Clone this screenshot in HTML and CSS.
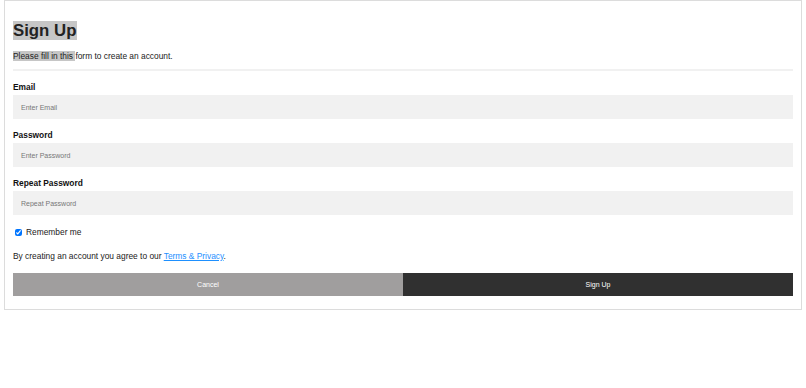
FILE: index.html
```html
<!DOCTYPE html>
<html>
<head>
<meta charset="utf-8">
<link rel="stylesheet" href="styles.css">
</head>
<body>
<form class="signup">
  <div class="container">
    <h1 class="title"><span class="sel">Sign Up </span></h1>
    <p class="intro"><span class="sel">Please fill in this </span>form to create an account.</p>
    <hr class="rule">

    <label class="field-label" for="email">Email</label>
    <input class="field" type="text" id="email" placeholder="Enter Email">

    <label class="field-label" for="psw">Password</label>
    <input class="field" type="password" id="psw" placeholder="Enter Password">

    <label class="field-label" for="psw-repeat">Repeat Password</label>
    <input class="field" type="password" id="psw-repeat" placeholder="Repeat Password">

    <label class="remember"><input class="check" type="checkbox" checked> Remember me</label>

    <p class="terms">By creating an account you agree to our <a class="link" href="#">Terms &amp; Privacy</a>.</p>

    <div class="actions">
      <button type="button" class="btn cancel">Cancel</button>
      <button type="button" class="btn submit">Sign Up</button>
    </div>
  </div>
</form>
</body>
</html>
```

FILE: styles.css
```css
html, body {
  margin: 0;
  padding: 0;
  background: #fff;
}
body {
  padding: 0 4px;
  font-family: "Liberation Sans", Arial, sans-serif;
  font-size: 8.4px;
  color: #222;
}
.signup {
  margin: 0;
}
.container {
  border: 1px solid #dcdcdc;
  padding: 8px 8px 9px 8px;
  box-sizing: border-box;
}
.title {
  font-size: 16.8px;
  line-height: 19px;
  margin: 12px 0 11px;
  font-weight: bold;
  color: #222;
}
.sel {
  background: #c6c6c6;
}
.title .sel {
  padding-right: 1px;
}
.intro {
  margin: 0 0 8px;
  line-height: 10px;
}
.rule {
  border: 0;
  border-top: 1px solid #f1f1f1;
  border-bottom: 1px solid #f1f1f1;
  height: 0;
  margin: 0 0 11px;
}
.field-label {
  display: block;
  font-weight: bold;
  line-height: 10px;
  color: #111;
}
.field {
  display: block;
  box-sizing: border-box;
  width: 100%;
  height: 24px;
  margin: 3px 0 11px;
  padding: 0 8px;
  border: 0;
  background: #f1f1f1;
  font-family: "Liberation Sans", Arial, sans-serif;
  font-size: 7px;
  color: #333;
  outline: none;
}
.field::placeholder {
  color: #777;
}
.remember {
  display: flex;
  align-items: center;
  gap: 4px;
  height: 10px;
  line-height: 10px;
  margin-top: 12px;
  padding-left: 2px;
  color: #222;
}
.check {
  width: 7px;
  height: 7px;
  margin: 0;
}
.terms {
  margin: 14px 0 12px;
  line-height: 10px;
}
.link {
  color: #1e90ff;
}
.actions {
  display: flex;
  margin: 0 0 4px;
}
.btn {
  flex: 1 1 0;
  height: 23px;
  border: 0;
  margin: 0;
  padding: 0;
  color: #fff;
  font-family: "Liberation Sans", Arial, sans-serif;
  font-size: 7px;
  cursor: pointer;
}
.cancel {
  background: #a09e9e;
}
.submit {
  background: #303030;
}
```
